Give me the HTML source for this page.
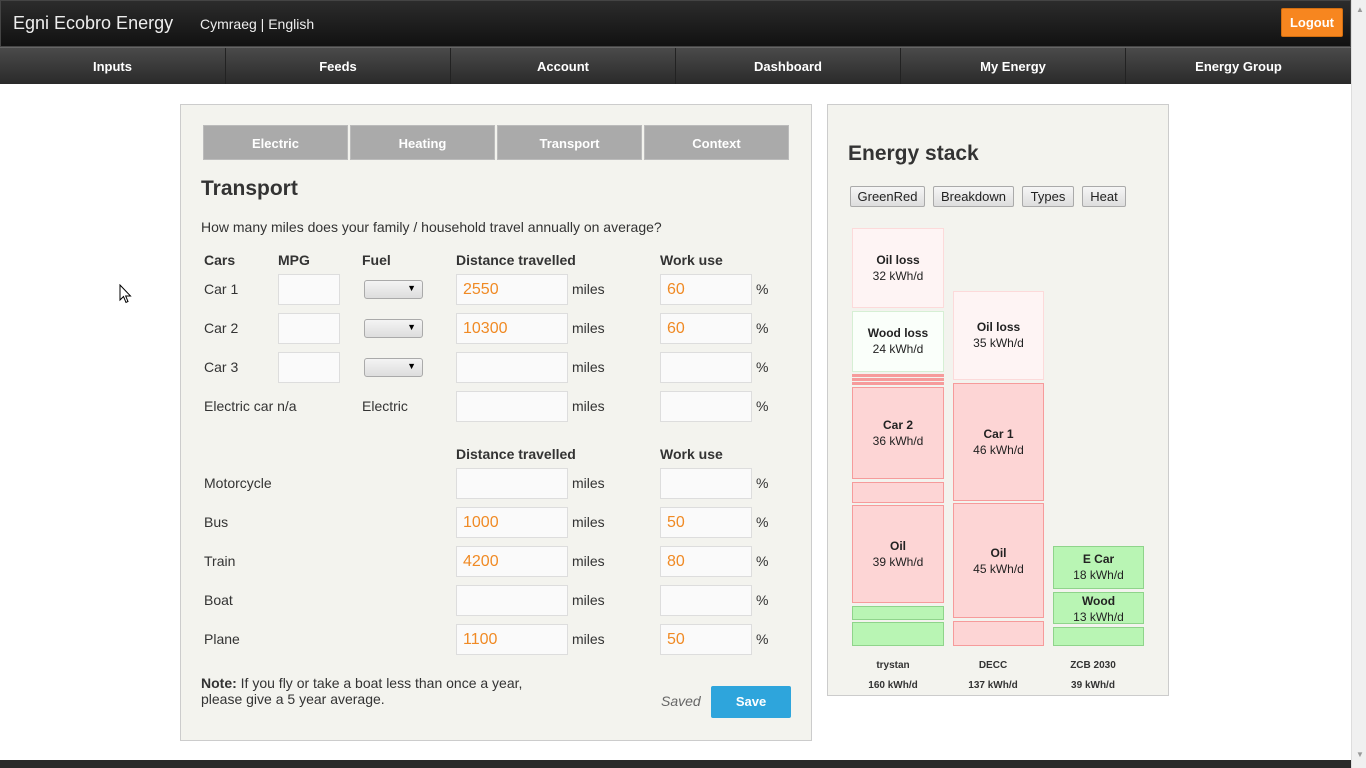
<!DOCTYPE html>
<html><head><meta charset="utf-8"><style>
*{box-sizing:border-box;margin:0;padding:0}
body{width:1366px;height:768px;overflow:hidden;background:#fff;font-family:"Liberation Sans",Arial,sans-serif;color:#333;position:relative}
.a{position:absolute}
.top{left:0;top:0;width:1351px;height:47px;background:linear-gradient(#2c2c2c,#111);border:1px solid #444}
.nav{left:0;top:47px;width:1351px;height:37px;background:linear-gradient(#4a4a4a,#2a2a2a);border-top:1px solid #666}
.nav div{position:absolute;top:0;height:36px;line-height:37px;text-align:center;color:#fff;font-weight:bold;font-size:13px;border-right:1px solid #222}
.sb{left:1351px;top:0;width:15px;height:768px;background:#f0f0f0;border-left:1px solid #ddd}
.panel{background:#f3f3ee;border:1px solid #ccc}
.tab{top:125px;height:35px;width:145px;background:#aaa;color:#fff;font-weight:bold;font-size:13px;text-align:center;line-height:35px;border:1px solid #bbb}
.lbl{font-size:14px;color:#333}
.hd{font-size:14px;font-weight:bold;color:#333}
.in{background:#fafafa;border:1px solid #ddd;height:31px;font-size:16px;color:#f08a24;padding:6px 0 0 6px}
.sel{width:59px;height:19px;border:1px solid #aaa;border-radius:3px;background:linear-gradient(#f4f4f4,#ddd);font-size:9px;text-align:right;padding:2px 6px 0 0;color:#000}
.bx{border:1px solid;text-align:center;font-size:12px;color:#222;line-height:16px}
.r{background:#fdd5d5;border-color:#f69b9b}
.g{background:#b9f5b4;border-color:#8fd48b}
.lr{background:#fef4f4;border-color:#fcdada}
.bx b{display:block}
.btn{top:186px;height:21px;border:1px solid #aaa;border-radius:2px;background:linear-gradient(#f6f6f6,#ddd);font-size:13px;line-height:19px;text-align:center;color:#222}
.cap{font-size:10px;font-weight:bold;color:#333;text-align:center;width:90px}
</style></head><body>
<div class="a top"></div>
<div class="a" style="left:13px;top:13px;font-size:18px;color:#eee">Egni Ecobro Energy</div>
<div class="a" style="left:200px;top:16px;font-size:14px;color:#eee">Cymraeg | English</div>
<div class="a" style="left:1281px;top:8px;width:62px;height:29px;background:#f7861f;border:1px solid #d26e10;border-radius:2px;color:#fff;font-weight:bold;font-size:13px;text-align:center;line-height:27px">Logout</div>
<div class="a nav">
<div style="left:0;width:226px">Inputs</div><div style="left:226px;width:225px">Feeds</div><div style="left:451px;width:225px">Account</div><div style="left:676px;width:225px">Dashboard</div><div style="left:901px;width:225px">My Energy</div><div style="left:1126px;width:225px;border:0">Energy Group</div>
</div>
<div class="a sb"><div class="a" style="left:4px;top:5px;font-size:8px;color:#999">▲</div><div class="a" style="left:4px;top:750px;font-size:8px;color:#999">▼</div></div>
<div class="a" style="left:0;top:760px;width:1351px;height:8px;background:#2a2a2a"></div>

<div class="a panel" style="left:180px;top:104px;width:632px;height:637px"></div>
<div class="a tab" style="left:203px">Electric</div>
<div class="a tab" style="left:350px">Heating</div>
<div class="a tab" style="left:497px">Transport</div>
<div class="a tab" style="left:644px">Context</div>
<div class="a" style="left:201px;top:177px;font-size:21px;font-weight:bold;color:#333">Transport</div>
<div class="a lbl" style="left:201px;top:219px">How many miles does your family / household travel annually on average?</div>

<div class="a hd" style="left:204px;top:252px">Cars</div>
<div class="a hd" style="left:278px;top:252px">MPG</div>
<div class="a hd" style="left:362px;top:252px">Fuel</div>
<div class="a hd" style="left:456px;top:252px">Distance travelled</div>
<div class="a hd" style="left:660px;top:252px">Work use</div>

<div class="a lbl" style="left:204px;top:281px">Car 1</div>
<div class="a in" style="left:278px;top:274px;width:62px"></div>
<div class="a sel" style="left:364px;top:280px">▼</div>
<div class="a in" style="left:456px;top:274px;width:112px">2550</div><div class="a lbl" style="left:572px;top:281px">miles</div>
<div class="a in" style="left:660px;top:274px;width:92px">60</div><div class="a lbl" style="left:756px;top:281px">%</div>

<div class="a lbl" style="left:204px;top:320px">Car 2</div>
<div class="a in" style="left:278px;top:313px;width:62px"></div>
<div class="a sel" style="left:364px;top:319px">▼</div>
<div class="a in" style="left:456px;top:313px;width:112px">10300</div><div class="a lbl" style="left:572px;top:320px">miles</div>
<div class="a in" style="left:660px;top:313px;width:92px">60</div><div class="a lbl" style="left:756px;top:320px">%</div>

<div class="a lbl" style="left:204px;top:359px">Car 3</div>
<div class="a in" style="left:278px;top:352px;width:62px"></div>
<div class="a sel" style="left:364px;top:358px">▼</div>
<div class="a in" style="left:456px;top:352px;width:112px"></div><div class="a lbl" style="left:572px;top:359px">miles</div>
<div class="a in" style="left:660px;top:352px;width:92px"></div><div class="a lbl" style="left:756px;top:359px">%</div>

<div class="a lbl" style="left:204px;top:398px">Electric car n/a</div>
<div class="a lbl" style="left:362px;top:398px">Electric</div>
<div class="a in" style="left:456px;top:391px;width:112px"></div><div class="a lbl" style="left:572px;top:398px">miles</div>
<div class="a in" style="left:660px;top:391px;width:92px"></div><div class="a lbl" style="left:756px;top:398px">%</div>

<div class="a hd" style="left:456px;top:446px">Distance travelled</div>
<div class="a hd" style="left:660px;top:446px">Work use</div>

<div class="a lbl" style="left:204px;top:475px">Motorcycle</div>
<div class="a in" style="left:456px;top:468px;width:112px"></div><div class="a lbl" style="left:572px;top:475px">miles</div>
<div class="a in" style="left:660px;top:468px;width:92px"></div><div class="a lbl" style="left:756px;top:475px">%</div>

<div class="a lbl" style="left:204px;top:514px">Bus</div>
<div class="a in" style="left:456px;top:507px;width:112px">1000</div><div class="a lbl" style="left:572px;top:514px">miles</div>
<div class="a in" style="left:660px;top:507px;width:92px">50</div><div class="a lbl" style="left:756px;top:514px">%</div>

<div class="a lbl" style="left:204px;top:553px">Train</div>
<div class="a in" style="left:456px;top:546px;width:112px">4200</div><div class="a lbl" style="left:572px;top:553px">miles</div>
<div class="a in" style="left:660px;top:546px;width:92px">80</div><div class="a lbl" style="left:756px;top:553px">%</div>

<div class="a lbl" style="left:204px;top:592px">Boat</div>
<div class="a in" style="left:456px;top:585px;width:112px"></div><div class="a lbl" style="left:572px;top:592px">miles</div>
<div class="a in" style="left:660px;top:585px;width:92px"></div><div class="a lbl" style="left:756px;top:592px">%</div>

<div class="a lbl" style="left:204px;top:631px">Plane</div>
<div class="a in" style="left:456px;top:624px;width:112px">1100</div><div class="a lbl" style="left:572px;top:631px">miles</div>
<div class="a in" style="left:660px;top:624px;width:92px">50</div><div class="a lbl" style="left:756px;top:631px">%</div>

<div class="a lbl" style="left:201px;top:675px;line-height:16px"><b>Note:</b> If you fly or take a boat less than once a year,<br>please give a 5 year average.</div>
<div class="a lbl" style="left:661px;top:693px;font-style:italic;color:#666">Saved</div>
<div class="a" style="left:711px;top:686px;width:80px;height:32px;background:#2ea5dc;border-radius:2px;color:#fff;font-weight:bold;font-size:13px;text-align:center;line-height:32px">Save</div>

<div class="a panel" style="left:827px;top:104px;width:342px;height:592px"></div>
<div class="a" style="left:848px;top:142px;font-size:21px;font-weight:bold;color:#333">Energy stack</div>
<div class="a btn" style="left:850px;width:75px">GreenRed</div>
<div class="a btn" style="left:933px;width:81px">Breakdown</div>
<div class="a btn" style="left:1022px;width:52px">Types</div>
<div class="a btn" style="left:1082px;width:44px">Heat</div>

<div class="a bx lr" style="left:852px;top:228px;width:92px;height:80px;padding-top:23px"><b>Oil loss</b>32 kWh/d</div>
<div class="a bx" style="left:852px;top:311px;width:92px;height:61px;padding-top:13px;background:#fafffa;border-color:#d6efd4"><b>Wood loss</b>24 kWh/d</div>
<div class="a" style="left:852px;top:374px;width:92px;height:3px;background:#f69b9b"></div>
<div class="a" style="left:852px;top:378px;width:92px;height:3px;background:#f69b9b"></div>
<div class="a" style="left:852px;top:382px;width:92px;height:3px;background:#f69b9b"></div>
<div class="a bx r" style="left:852px;top:387px;width:92px;height:92px;padding-top:29px"><b>Car 2</b>36 kWh/d</div>
<div class="a bx r" style="left:852px;top:482px;width:92px;height:21px"></div>
<div class="a bx r" style="left:852px;top:505px;width:92px;height:98px;padding-top:32px"><b>Oil</b>39 kWh/d</div>
<div class="a bx g" style="left:852px;top:606px;width:92px;height:14px"></div>
<div class="a bx g" style="left:852px;top:622px;width:92px;height:24px"></div>

<div class="a bx lr" style="left:953px;top:291px;width:91px;height:89px;padding-top:27px"><b>Oil loss</b>35 kWh/d</div>
<div class="a bx r" style="left:953px;top:383px;width:91px;height:118px;padding-top:42px"><b>Car 1</b>46 kWh/d</div>
<div class="a bx r" style="left:953px;top:503px;width:91px;height:115px;padding-top:41px"><b>Oil</b>45 kWh/d</div>
<div class="a bx r" style="left:953px;top:621px;width:91px;height:25px"></div>

<div class="a bx g" style="left:1053px;top:546px;width:91px;height:43px;padding-top:4px"><b>E Car</b>18 kWh/d</div>
<div class="a bx g" style="left:1053px;top:592px;width:91px;height:32px;padding-top:0"><b>Wood</b>13 kWh/d</div>
<div class="a bx g" style="left:1053px;top:627px;width:91px;height:19px"></div>

<div class="a cap" style="left:848px;top:660px">trystan</div>
<div class="a cap" style="left:948px;top:660px">DECC</div>
<div class="a cap" style="left:1048px;top:660px">ZCB 2030</div>
<div class="a cap" style="left:848px;top:680px">160 kWh/d</div>
<div class="a cap" style="left:948px;top:680px">137 kWh/d</div>
<div class="a cap" style="left:1048px;top:680px">39 kWh/d</div>

<svg class="a" style="left:119px;top:284px" width="14" height="21" viewBox="0 0 14 21"><path d="M1 1 L1 16 L4.5 12.5 L7 18.5 L9 17.5 L6.7 12 L11.5 12 Z" fill="#fff" stroke="#000" stroke-width="1"/></svg>
</body></html>
